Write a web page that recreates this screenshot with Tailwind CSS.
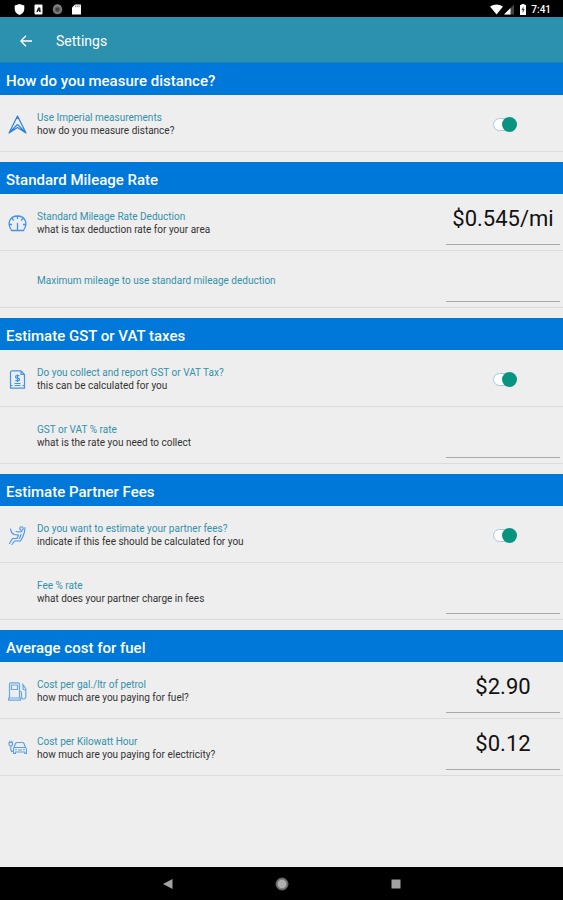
<!DOCTYPE html>
<html lang="en">
<head>
<meta charset="utf-8">
<meta name="viewport" content="width=device-width, initial-scale=1">
<title>Settings</title>
<script src="https://cdn.jsdelivr.net/npm/@tailwindcss/browser@4"></script>
</head>
<body class="flex min-h-screen flex-col bg-[#eeeeee] font-[Roboto,sans-serif] text-[#333333]">

<div class="flex h-[17px] items-center justify-between bg-black pt-0.5 pr-3 pl-3.5 text-white">
  <div class="flex items-center gap-2">
    <svg class="size-[11px]" viewBox="0 0 11 11" fill="#fff"><path d="M5.5 0 10.300 1.500V5c0 3-2 5-4.800 6C2.700 10 .7 8 .7 5V1.500Z"/></svg>
    <svg class="size-[11px]" viewBox="0 0 11 11"><rect x="1.500" y=".5" width="8" height="10" rx="1" fill="#fff"/><path d="M3.300 8 5 3.500h2.200L7.800 8H6.300L5.800 6.500 4.800 8Z" fill="#222"/></svg>
    <svg class="size-[11px]" viewBox="0 0 11 11"><circle cx="5.500" cy="5.500" r="4.800" fill="#777"/><circle cx="5.500" cy="5.500" r="2.200" fill="#444"/><path d="M2 2.500A4.500 4.500 0 0 1 9 2.500" fill="none" stroke="#999"/></svg>
    <svg class="size-[11px]" viewBox="0 0 11 11" fill="#fff"><path d="M4 .5h5.500q.5 0 .5.500v9q0 .5-.5.500h-8q-.5 0-.5-.5V3.500Z"/><path d="M4.500 1.500v1.700M6.300 1.500v1.700M8.100 1.500v1.700" stroke="#555" stroke-width=".7"/></svg>
  </div>
  <div class="flex items-center gap-1">
    <svg class="h-[11px] w-[25px]" viewBox="0 0 25 11" fill="#fff"><path d="M0 2.500Q6.500-1.500 13 2.500L6.500 10.500Z"/><path d="M14 10.500 24 .5v10Z" fill="#444"/><path d="M14 10.500 20.500 4v6.500Z"/></svg>
    <svg class="h-[11px] w-2" viewBox="0 0 8 11"><path d="M2.500 0h3v1H7v10H1V1h1.500Z" fill="#fff"/><path d="M4.500 2.500 2.500 6h1.200v3L5.700 5.300H4.500Z" fill="#444"/></svg>
    <span class="text-[10px] leading-[13px] font-medium">7:41</span>
  </div>
</div>

<header class="flex h-[46px] items-center gap-5 border-b border-[#1f7fb0] bg-[#2b91af] px-4 pt-0.5 text-white">
  <button type="button" aria-label="Back" class="flex size-5 items-center justify-center">
    <svg class="size-3" viewBox="0 0 12 12" fill="none" stroke="#fff" stroke-width="1.400"><path d="M12 6H1M6 .8.900 6 6 11.200"/></svg>
  </button>
  <h1 class="text-[14px] leading-5">Settings</h1>
</header>

<main class="flex flex-1 flex-col gap-2.5">
  <section>
    <h2 class="flex h-8 items-center bg-[#0078d9] px-1.5 pt-1 text-[15px] leading-5 font-medium text-white">How do you measure distance?</h2>
    <div class="flex h-[57px] items-center border-b border-[#dcdcdc] pt-0.5 pr-[3px] pl-2">
      <svg class="mr-2.5 size-[19px] shrink-0" viewBox="0 0 19 19" fill="none" stroke="#2f7fdc" stroke-width="1.200" stroke-linejoin="round"><path d="M9.500 1 18 18 9.500 12.500 1 18ZM9.500 1V4M9.500 9.500 18 18M9.500 9.500 1 18"/></svg>
      <label for="imperial" class="flex-1 text-[10px] leading-[13px]"><span class="block text-[#3391ab]">Use Imperial measurements</span><span class="block">how do you measure distance?</span></label>
      <div class="flex w-[114px] justify-center pl-1">
        <span class="relative flex h-[15px] w-6 items-center">
          <input id="imperial" type="checkbox" role="switch" checked class="peer h-[13px] w-5 appearance-none rounded-full border border-[#a9c6e4] bg-white">
          <span class="pointer-events-none absolute top-0 left-0 size-[15px] rounded-full bg-[#a0a0a0] peer-checked:right-0 peer-checked:left-auto peer-checked:bg-[#079481]"></span>
        </span>
      </div>
    </div>
  </section>

  <section>
    <h2 class="flex h-8 items-center bg-[#0078d9] px-1.5 pt-1 text-[15px] leading-5 font-medium text-white">Standard Mileage Rate</h2>
    <div class="flex h-[57px] items-center border-b border-[#dcdcdc] pt-0.5 pr-[3px] pl-2">
      <svg class="mr-2.5 size-[19px] shrink-0" viewBox="0 0 19 19" fill="none" stroke="#4292ee" stroke-width="1.300" stroke-linecap="round" stroke-linejoin="round"><path d="M3.500 16.500C-1.500 9 2 2 9.500 2S20.500 9 15.500 16.500ZM9.500 2v2.500M9.500 9.500V16M4 4.500l1.500 1.500M15 4.500 13.500 6M1 10.500h2.500M18 10.500h-2.500"/></svg>
      <label for="deduction" class="flex-1 text-[10px] leading-[13px]"><span class="block text-[#3391ab]">Standard Mileage Rate Deduction</span><span class="block">what is tax deduction rate for your area</span></label>
      <input id="deduction" type="text" value="$0.545/mi" class="h-11 w-[114px] border-b border-[#a8a8a8] pb-2 text-center text-[22px] text-[#111111] outline-none">
    </div>
    <div class="flex h-[57px] items-center border-b border-[#dcdcdc] pt-0.5 pr-[3px] pl-[37px]">
      <label for="maximum" class="flex-1 text-[10px] leading-[13px] text-[#3391ab]">Maximum mileage to use standard mileage deduction</label>
      <input id="maximum" type="text" class="h-11 w-[114px] border-b border-[#a8a8a8] pb-2 text-center text-[22px] text-[#111111] outline-none">
    </div>
  </section>

  <section>
    <h2 class="flex h-8 items-center bg-[#0078d9] px-1.5 pt-1 text-[15px] leading-5 font-medium text-white">Estimate GST or VAT taxes</h2>
    <div class="flex h-[57px] items-center border-b border-[#dcdcdc] pt-0.5 pr-[3px] pl-2">
      <svg class="mr-2.5 size-[19px] shrink-0" viewBox="0 0 19 19" fill="none" stroke="#4292ee" stroke-width="1.200" stroke-linejoin="round"><path d="M4 .8h9l3.500 3.500v13.900H2.500V2.300Q2.500.8 4 .8ZM13 .8v3.500h3.500M2.500 15.500h2M16.500 15.500h-2"/><path d="M11.500 5.700H8.800Q7.500 5.700 7.500 6.900T9 8.200H10Q11.500 8.200 11.500 9.500T10 10.700H7.300M9.500 4.500v7.500M6.500 13.500h6M6.500 15.500h6"/></svg>
      <label for="collect" class="flex-1 text-[10px] leading-[13px]"><span class="block text-[#3391ab]">Do you collect and report GST or VAT Tax?</span><span class="block">this can be calculated for you</span></label>
      <div class="flex w-[114px] justify-center pl-1">
        <span class="relative flex h-[15px] w-6 items-center">
          <input id="collect" type="checkbox" role="switch" checked class="peer h-[13px] w-5 appearance-none rounded-full border border-[#a9c6e4] bg-white">
          <span class="pointer-events-none absolute top-0 left-0 size-[15px] rounded-full bg-[#a0a0a0] peer-checked:right-0 peer-checked:left-auto peer-checked:bg-[#079481]"></span>
        </span>
      </div>
    </div>
    <div class="flex h-[57px] items-center border-b border-[#dcdcdc] pt-0.5 pr-[3px] pl-[37px]">
      <label for="gst" class="flex-1 text-[10px] leading-[13px]"><span class="block text-[#3391ab]">GST or VAT % rate</span><span class="block">what is the rate you need to collect</span></label>
      <input id="gst" type="text" class="h-11 w-[114px] border-b border-[#a8a8a8] pb-2 text-center text-[22px] text-[#111111] outline-none">
    </div>
  </section>

  <section>
    <h2 class="flex h-8 items-center bg-[#0078d9] px-1.5 pt-1 text-[15px] leading-5 font-medium text-white">Estimate Partner Fees</h2>
    <div class="flex h-[57px] items-center border-b border-[#dcdcdc] pt-0.5 pr-[3px] pl-2">
      <svg class="mr-2.5 size-[19px] shrink-0" viewBox="0 0 19 19" fill="none" stroke="#4a94ee" stroke-width="1.100" stroke-linecap="round" stroke-linejoin="round"><circle cx="13.500" cy="2.500" r="1.700"/><path d="M17 1.500 16.500 6 14.500 11.500 12.500 15H6.500L4 18.500M1.500 17.500 4.500 12.500H9L10.500 9 5.500 8.500M11 6 8 5.500M11 6l3-.5M13 8.500 11.500 12.500M2.500 3l1 3.500L6 8.500"/></svg>
      <label for="partner" class="flex-1 text-[10px] leading-[13px]"><span class="block text-[#3391ab]">Do you want to estimate your partner fees?</span><span class="block">indicate if this fee should be calculated for you</span></label>
      <div class="flex w-[114px] justify-center pl-1">
        <span class="relative flex h-[15px] w-6 items-center">
          <input id="partner" type="checkbox" role="switch" checked class="peer h-[13px] w-5 appearance-none rounded-full border border-[#a9c6e4] bg-white">
          <span class="pointer-events-none absolute top-0 left-0 size-[15px] rounded-full bg-[#a0a0a0] peer-checked:right-0 peer-checked:left-auto peer-checked:bg-[#079481]"></span>
        </span>
      </div>
    </div>
    <div class="flex h-[57px] items-center border-b border-[#dcdcdc] pt-0.5 pr-[3px] pl-[37px]">
      <label for="fee" class="flex-1 text-[10px] leading-[13px]"><span class="block text-[#3391ab]">Fee % rate</span><span class="block">what does your partner charge in fees</span></label>
      <input id="fee" type="text" class="h-11 w-[114px] border-b border-[#a8a8a8] pb-2 text-center text-[22px] text-[#111111] outline-none">
    </div>
  </section>

  <section>
    <h2 class="flex h-8 items-center bg-[#0078d9] px-1.5 pt-1 text-[15px] leading-5 font-medium text-white">Average cost for fuel</h2>
    <div class="flex h-[57px] items-center border-b border-[#dcdcdc] pt-0.5 pr-[3px] pl-2">
      <svg class="mr-2.5 size-[19px] shrink-0" viewBox="0 0 19 19" fill="none" stroke="#68a7e6" stroke-width="1.200" stroke-linecap="round" stroke-linejoin="round"><path d="M1.500 16V2Q1.500.8 2.700.8H10.300Q11.500.8 11.500 2V16M.6 16H12.400v2.200H.6ZM3.500 3h6v4.500h-6ZM11.500 9.500h1Q13.500 9.500 13.500 11v4Q13.500 17 15.500 17T17.800 15V6.500L14.500 2M15 3v4q.5 1 2.800 1"/></svg>
      <label for="petrol" class="flex-1 text-[10px] leading-[13px]"><span class="block text-[#3391ab]">Cost per gal./ltr of petrol</span><span class="block">how much are you paying for fuel?</span></label>
      <input id="petrol" type="text" value="$2.90" class="h-11 w-[114px] border-b border-[#a8a8a8] pb-2 text-center text-[22px] text-[#111111] outline-none">
    </div>
    <div class="flex h-[57px] items-center border-b border-[#dcdcdc] pt-0.5 pr-[3px] pl-2">
      <svg class="mr-2.5 size-[19px] shrink-0" viewBox="0 0 19 19" fill="none" stroke="#5a9fe6" stroke-width="1.100" stroke-linecap="round" stroke-linejoin="round"><path d="M1 3.500h3.500V5.500Q4.500 7 2.800 7T1 5.500ZM1.800 3.500V2M3.700 3.500V2M2.800 7v3.500Q2.800 12.500 5 12.500"/><path d="M6 8.500 7.500 4.500Q8 3.500 9 3.500h5.500Q15.500 3.500 16 4.500L17.500 8.500 18.500 10v4.500H16.800V13H7.500v1.500H5.500V10ZM6 8.500H17.500M7.500 10.700h1.200M15.200 10.700h1.200M10.500 11h3"/></svg>
      <label for="kilowatt" class="flex-1 text-[10px] leading-[13px]"><span class="block text-[#3391ab]">Cost per Kilowatt Hour</span><span class="block">how much are you paying for electricity?</span></label>
      <input id="kilowatt" type="text" value="$0.12" class="h-11 w-[114px] border-b border-[#a8a8a8] pb-2 text-center text-[22px] text-[#111111] outline-none">
    </div>
  </section>
</main>

<nav aria-label="System" class="flex h-[33px] items-center justify-center gap-[98px] bg-black">
  <button type="button" aria-label="Back" class="flex size-4 items-center justify-center"><svg class="size-2.5" viewBox="0 0 10 10"><path d="M0 5 9.500 0v10Z" fill="#a3a3a3"/></svg></button>
  <button type="button" aria-label="Home" class="flex size-4 items-center justify-center"><svg class="size-3.5" viewBox="0 0 14 14"><circle cx="7" cy="7" r="6" fill="#777" stroke="#666"/><circle cx="7" cy="7" r="4.300" fill="#b0b0b0"/></svg></button>
  <button type="button" aria-label="Recent apps" class="flex size-4 items-center justify-center"><svg class="size-2.5" viewBox="0 0 10 10"><path d="M.5.5h9v9h-9Z" fill="#a3a3a3"/></svg></button>
</nav>
</body>
</html>
